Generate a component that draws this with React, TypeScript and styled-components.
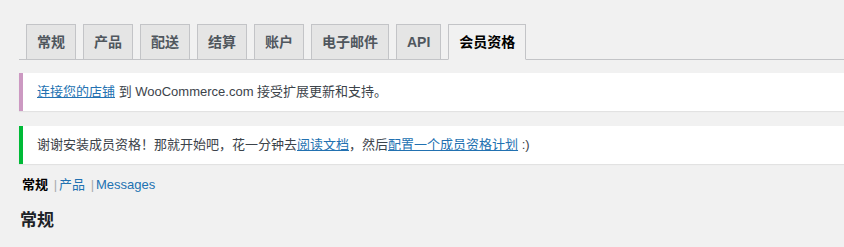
import React from 'react'
import styled, { createGlobalStyle } from 'styled-components'

const GlobalStyle = createGlobalStyle`
  html, body {
    margin: 0;
    padding: 0;
    background: #f1f1f1;
  }
  body {
    font-family: "Liberation Sans", "Noto Sans CJK SC", sans-serif;
    font-size: 13px;
    color: #3c434a;
  }
`

const Wrap = styled.div`
  padding: 24px 0 0 19px;
`

const TabBar = styled.nav`
  display: flex;
  border-bottom: 1px solid #c3c4c7;
  height: 35px;
`

const Tab = styled.a<{ $active?: boolean }>`
  display: block;
  margin-left: 7px;
  height: 34px;
  padding: 0 10px;
  border: 1px solid #c3c4c7;
  border-bottom-color: ${({ $active }) => ($active ? '#f1f1f1' : '#c3c4c7')};
  background: ${({ $active }) => ($active ? '#f1f1f1' : '#e5e5e5')};
  color: ${({ $active }) => ($active ? '#000' : '#50575e')};
  font-size: 14px;
  font-weight: 600;
  line-height: 34px;
  text-decoration: none;
  white-space: nowrap;
`

const Notice = styled.div<{ $accent: string; $top: number }>`
  margin-top: ${({ $top }) => $top}px;
  background: #fff;
  border-left: 4px solid ${({ $accent }) => $accent};
  box-shadow: 0 1px 1px rgba(0, 0, 0, 0.06);
  padding: 9px 12px 9px 14px;
  line-height: 20px;
  font-size: 13px;
  color: #3c434a;
`

const Link = styled.a`
  color: #2271b1;
  text-decoration: underline;
`

const SubNav = styled.ul`
  list-style: none;
  display: flex;
  margin: 11px 0 0 1px;
  padding: 0;
  line-height: 20px;
  font-size: 13px;
`

const SubItem = styled.li`
  color: #a7aaad;
`

const SubLink = styled.a<{ $current?: boolean }>`
  padding: 0 2px;
  color: ${({ $current }) => ($current ? '#000' : '#2271b1')};
  font-weight: ${({ $current }) => ($current ? 600 : 400)};
  text-decoration: none;
`

const Heading = styled.h2`
  margin: 14px 0 0 1px;
  font-size: 17px;
  line-height: 24px;
  font-weight: 600;
  color: #1d2327;
`

const tabs = ['常规', '产品', '配送', '结算', '账户', '电子邮件', 'API', '会员资格']

export default function App() {
  return (
    <>
      <GlobalStyle />
      <Wrap>
        <TabBar>
          {tabs.map((t) => (
            <Tab key={t} $active={t === '会员资格'}>
              {t}
            </Tab>
          ))}
        </TabBar>

        <Notice $accent="#cc99c2" $top={13}>
          <Link>连接您的店铺</Link> 到 WooCommerce.com 接受扩展更新和支持。
        </Notice>

        <Notice $accent="#00ba37" $top={15}>
          谢谢安装成员资格！那就开始吧，花一分钟去<Link>阅读文档</Link>，然后<Link>配置一个成员资格计划</Link> :)
        </Notice>

        <SubNav>
          <SubItem>
            <SubLink $current>常规</SubLink> |
          </SubItem>
          <SubItem>
            <SubLink>产品</SubLink> |
          </SubItem>
          <SubItem>
            <SubLink>Messages</SubLink>
          </SubItem>
        </SubNav>

        <Heading>常规</Heading>
      </Wrap>
    </>
  )
}
